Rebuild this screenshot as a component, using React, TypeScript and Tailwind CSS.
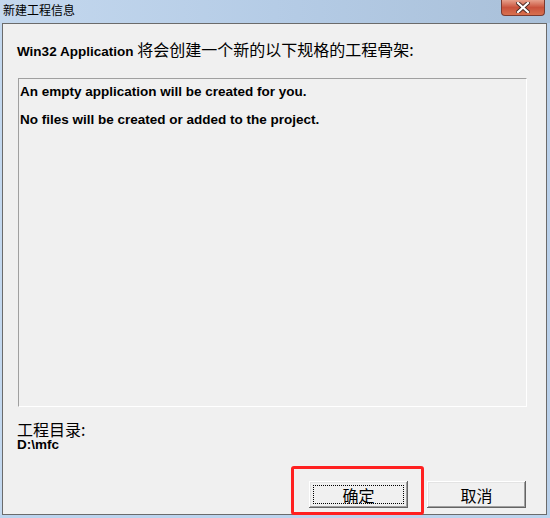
import React from 'react';

const cjk = { fontFamily: '"Noto Sans CJK SC", "Liberation Sans", sans-serif' };
const latin = { fontFamily: '"Liberation Sans", "Noto Sans CJK SC", sans-serif' };

const DialogButton = ({ label, focused }: { label: string; focused?: boolean }) => (
  <button
    className="relative w-[99px] h-[27px] bg-[#f0f0f0] text-[16px] text-black leading-none shadow-[inset_-1px_-1px_0_#646464,inset_1px_1px_0_#ffffff,inset_-2px_-2px_0_#a0a0a0,inset_2px_2px_0_#e3e3e3]"
    style={cjk}
  >
    {focused && <span className="absolute inset-[4px] border border-dotted border-black"></span>}
    <span className="relative">{label}</span>
  </button>
);

const App = () => {
  return (
    <div className="relative w-[550px] h-[518px] flex flex-col bg-[#bed4ec] overflow-hidden">
      {/* Title bar */}
      <div className="h-[23px] flex items-start justify-between bg-gradient-to-r from-[#c4d8ee] via-[#b5cce6] to-[#a9c0d9]">
        <span className="pl-[3px] pt-[1px] text-[12px] leading-[18px] text-black" style={cjk}>
          新建工程信息
        </span>
        <div className="mr-[5px] w-[44px] h-[16px] flex items-center justify-center rounded-b-[4px] border border-t-0 border-[#7a3a30] bg-gradient-to-b from-[#e6a08c] via-[#c9523c] to-[#d8704e]">
          <svg width="14" height="11" viewBox="0 0 14 11">
            <path d="M2 1 L12 10 M12 1 L2 10" stroke="#4a2a24" strokeWidth="4" strokeLinecap="square" />
            <path d="M2 1 L12 10 M12 1 L2 10" stroke="#ffffff" strokeWidth="2.2" strokeLinecap="square" />
          </svg>
        </div>
      </div>

      <div className="flex flex-1">
        <div className="w-[2px] bg-[#c3d8ef]"></div>

        {/* Client area */}
        <div className="flex-1 flex flex-col border border-[#6b6b6b] bg-[#f0f0f0] pl-[14px] pr-[19px]">
          <div className="pt-[17px] leading-[16px] text-black">
            <span className="text-[13.5px] font-bold" style={latin}>Win32 Application </span>
            <span className="text-[16px]" style={cjk}>将会创建一个新的以下规格的工程骨架:</span>
          </div>

          <div
            className="mt-[18px] ml-[1px] h-[329px] border border-t-[#a0a0a0] border-l-[#a0a0a0] border-b-white border-r-white pl-[1px] pt-[5px] text-[13.5px] font-bold text-black"
            style={latin}
          >
            <p className="leading-[16px]">An empty application will be created for you.</p>
            <p className="mt-[12px] leading-[16px]">No files will be created or added to the project.</p>
          </div>

          <p className="mt-[14px] text-[16px] leading-[16px] text-black" style={cjk}>工程目录:</p>
          <p className="mt-[1px] text-[13.5px] font-bold leading-[14px] text-black" style={latin}>D:\mfc</p>

          <div className="mt-auto pb-[6px] flex justify-end gap-[19px] pr-[1px]">
            <DialogButton label="确定" focused />
            <DialogButton label="取消" />
          </div>
        </div>

        <div className="w-[3px] bg-[#b9d0ea]"></div>
      </div>
      <div className="h-[3px] bg-[#bcd4ee]"></div>

      {/* Red annotation box */}
      <div className="absolute left-[291px] top-[466px] w-[133px] h-[49px] rounded-[3px] border-[3px] border-[#ff2020]"></div>
    </div>
  );
};

export default App;
